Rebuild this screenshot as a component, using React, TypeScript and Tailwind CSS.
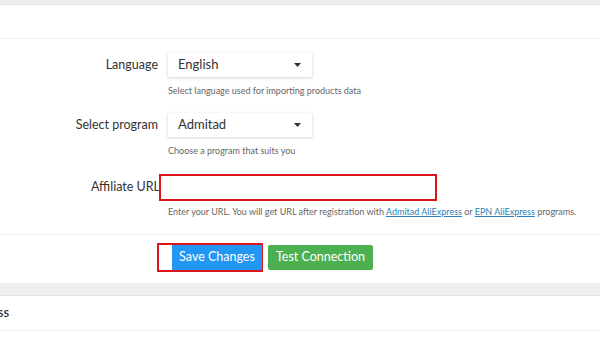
import React from 'react';

const Caret = () => (
  <svg width="7" height="4" viewBox="0 0 7 4" className="shrink-0">
    <path d="M0 0 L7 0 L3.5 4 Z" fill="#333" />
  </svg>
);

const SelectBox = ({ value }: { value: string }) => (
  <div className="w-[144px] h-[24px] bg-white shadow-[0_1px_3px_rgba(0,0,0,0.18)] flex items-center justify-between pl-[10px] pr-[11px] text-[13px] text-[#333]">
    <span>{value}</span>
    <Caret />
  </div>
);

const App: React.FC = () => {
  return (
    <div className="w-[600px] h-[337px] overflow-hidden bg-white font-['Lato',sans-serif] text-[#333]">
      {/* top gap between cards */}
      <div className="h-[5px] bg-[#ececec] border-b border-[#e2e2e2]" />
      <div className="h-[34px] border-b border-[#f0f0f0]" />

      {/* Form */}
      <div className="pt-[14px]">
        <div className="grid grid-cols-[158px_1fr] gap-x-[10px]">
          {/* Language */}
          <div className="h-[24px] flex items-center justify-end text-[12.5px]">Language</div>
          <SelectBox value="English" />
          <div />
          <div className="pt-[7px] h-[36px] text-[9px] text-[#666]">Select language used for importing products data</div>

          {/* Program */}
          <div className="h-[24px] flex items-center justify-end text-[12.5px]">Select program</div>
          <SelectBox value="Admitad" />
          <div />
          <div className="pt-[7px] h-[37px] text-[9px] text-[#666]">Choose a program that suits you</div>

          {/* Affiliate URL */}
          <div className="h-[27px] flex items-center justify-end text-[12.5px] -mr-[2px]">Affiliate URL</div>
          <div className="relative h-[27px]">
            <div className="absolute left-[-9px] top-0 w-[278px] h-[27px] border-2 border-[#d9141b] bg-white" />
          </div>
          <div />
          <div className="pt-[4px] h-[33px] text-[9px] text-[#666] whitespace-nowrap">
            Enter your URL. You will get URL after registration with{' '}
            <span className="underline text-[#2c7fb8]">Admitad AliExpress</span> or{' '}
            <span className="underline text-[#2c7fb8]">EPN AliExpress</span> programs.
          </div>
        </div>

        <div className="border-t border-[#eeeeee]" />

        {/* Buttons */}
        <div className="pl-[172px] pt-[10px] flex gap-[6px]">
          <div className="relative">
            <div className="absolute left-[-15px] top-[-2px] w-[106px] h-[29px] border-2 border-[#d9141b]" />
            <button className="relative w-[90px] h-[25px] bg-[#2196f3] text-white text-[12.5px] flex items-center justify-center">
              Save Changes
            </button>
          </div>
          <button className="w-[105px] h-[25px] bg-[#4caf50] text-white text-[12.5px] rounded-[2px] flex items-center justify-center">
            Test Connection
          </button>
        </div>
      </div>

      {/* Next card */}
      <div className="mt-[13px] h-[13px] bg-[#efefef] border-b border-[#e4e4e4]" />
      <div className="h-[35px] border-b border-[#f0f0f0] flex items-center text-[13px] font-semibold text-[#333]">
        <span className="-ml-[35px]">Process</span>
      </div>
    </div>
  );
};

export default App;
